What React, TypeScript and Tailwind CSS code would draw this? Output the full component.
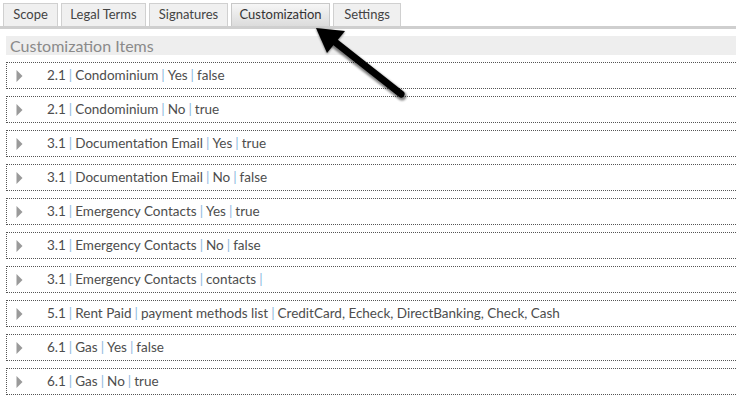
import React from "react";

const tabs = [
  { label: "Scope", w: "w-[55px]" },
  { label: "Legal Terms", w: "w-[85px]" },
  { label: "Signatures", w: "w-[79px]" },
  { label: "Customization", w: "w-[99px]" },
  { label: "Settings", w: "w-[68px]" },
];

const items: string[][] = [
  ["2.1", "Condominium", "Yes", "false"],
  ["2.1", "Condominium", "No", "true"],
  ["3.1", "Documentation Email", "Yes", "true"],
  ["3.1", "Documentation Email", "No", "false"],
  ["3.1", "Emergency Contacts", "Yes", "true"],
  ["3.1", "Emergency Contacts", "No", "false"],
  ["3.1", "Emergency Contacts", "contacts", ""],
  ["5.1", "Rent Paid", "payment methods list", "CreditCard, Echeck, DirectBanking, Check, Cash"],
  ["6.1", "Gas", "Yes", "false"],
  ["6.1", "Gas", "No", "true"],
];

const Row = ({ parts }: { parts: string[] }) => {
  return (
    <div className="flex items-center h-[27px] border border-dotted border-[#555] border-r-0">
      <svg width="7" height="12" viewBox="0 0 7 12" className="ml-[9px] mr-[24px]">
        <path d="M0.5 0 L6.5 6 L0.5 12 Z" fill="#9a9a9a" />
      </svg>
      <span className="text-[13.5px] text-[#4d4d4d] whitespace-nowrap">
        {parts.map((p, i) => (
          <React.Fragment key={i}>
            {i > 0 && <span className="text-[#8db8e0] mx-[3px]">|</span>}
            {p}
          </React.Fragment>
        ))}
      </span>
    </div>
  );
};

export default function App() {
  return (
    <div
      className="relative w-[736px] h-[395px] overflow-hidden bg-white"
      style={{ fontFamily: "Lato, 'Open Sans', sans-serif" }}
    >
      <div className="flex gap-[3px] pl-[3px] pt-[3px] border-b-[3px] border-[#cfcfcf]">
        {tabs.map((t) => (
          <div
            key={t.label}
            className={
              t.label === "Customization"
                ? `${t.w} h-[23px] flex items-center justify-center text-[13px] text-[#333] border border-b-0 border-[#c8c8c8] bg-gradient-to-b from-[#f6f6f6] to-[#dcdcdc]`
                : `${t.w} h-[23px] flex items-center justify-center text-[13px] text-[#444] border border-b-0 border-[#d0d0d0] bg-[#f0f0f0]`
            }
          >
            {t.label}
          </div>
        ))}
      </div>
      <div className="pl-[6px] pt-[7px]">
        <div className="h-[19px] bg-[#eeeeee] flex items-center pl-[4px] text-[16px] text-[#8a8a8a] leading-none">
          Customization Items
        </div>
        <div className="flex flex-col gap-[7px] mt-[7px]">
          {items.map((it, i) => (
            <Row key={i} parts={it} />
          ))}
        </div>
      </div>
      <svg
        className="absolute left-[305px] top-[20px]"
        width="110"
        height="90"
        viewBox="0 0 110 90"
      >
        <defs>
          <filter id="sh" x="-20%" y="-20%" width="140%" height="140%">
            <feGaussianBlur stdDeviation="1.2" />
          </filter>
        </defs>
        <g filter="url(#sh)" opacity="0.5">
          <line x1="30" y1="24" x2="97" y2="76" stroke="#000" strokeWidth="9" strokeLinecap="round" />
          <path d="M11 9 L40 12 L22 34 Z" fill="#000" />
        </g>
        <line x1="30" y1="22" x2="96" y2="74" stroke="#000" strokeWidth="7" strokeLinecap="round" />
        <path d="M11 8 L40 11 L22 33 Z" fill="#000" />
      </svg>
    </div>
  );
}
